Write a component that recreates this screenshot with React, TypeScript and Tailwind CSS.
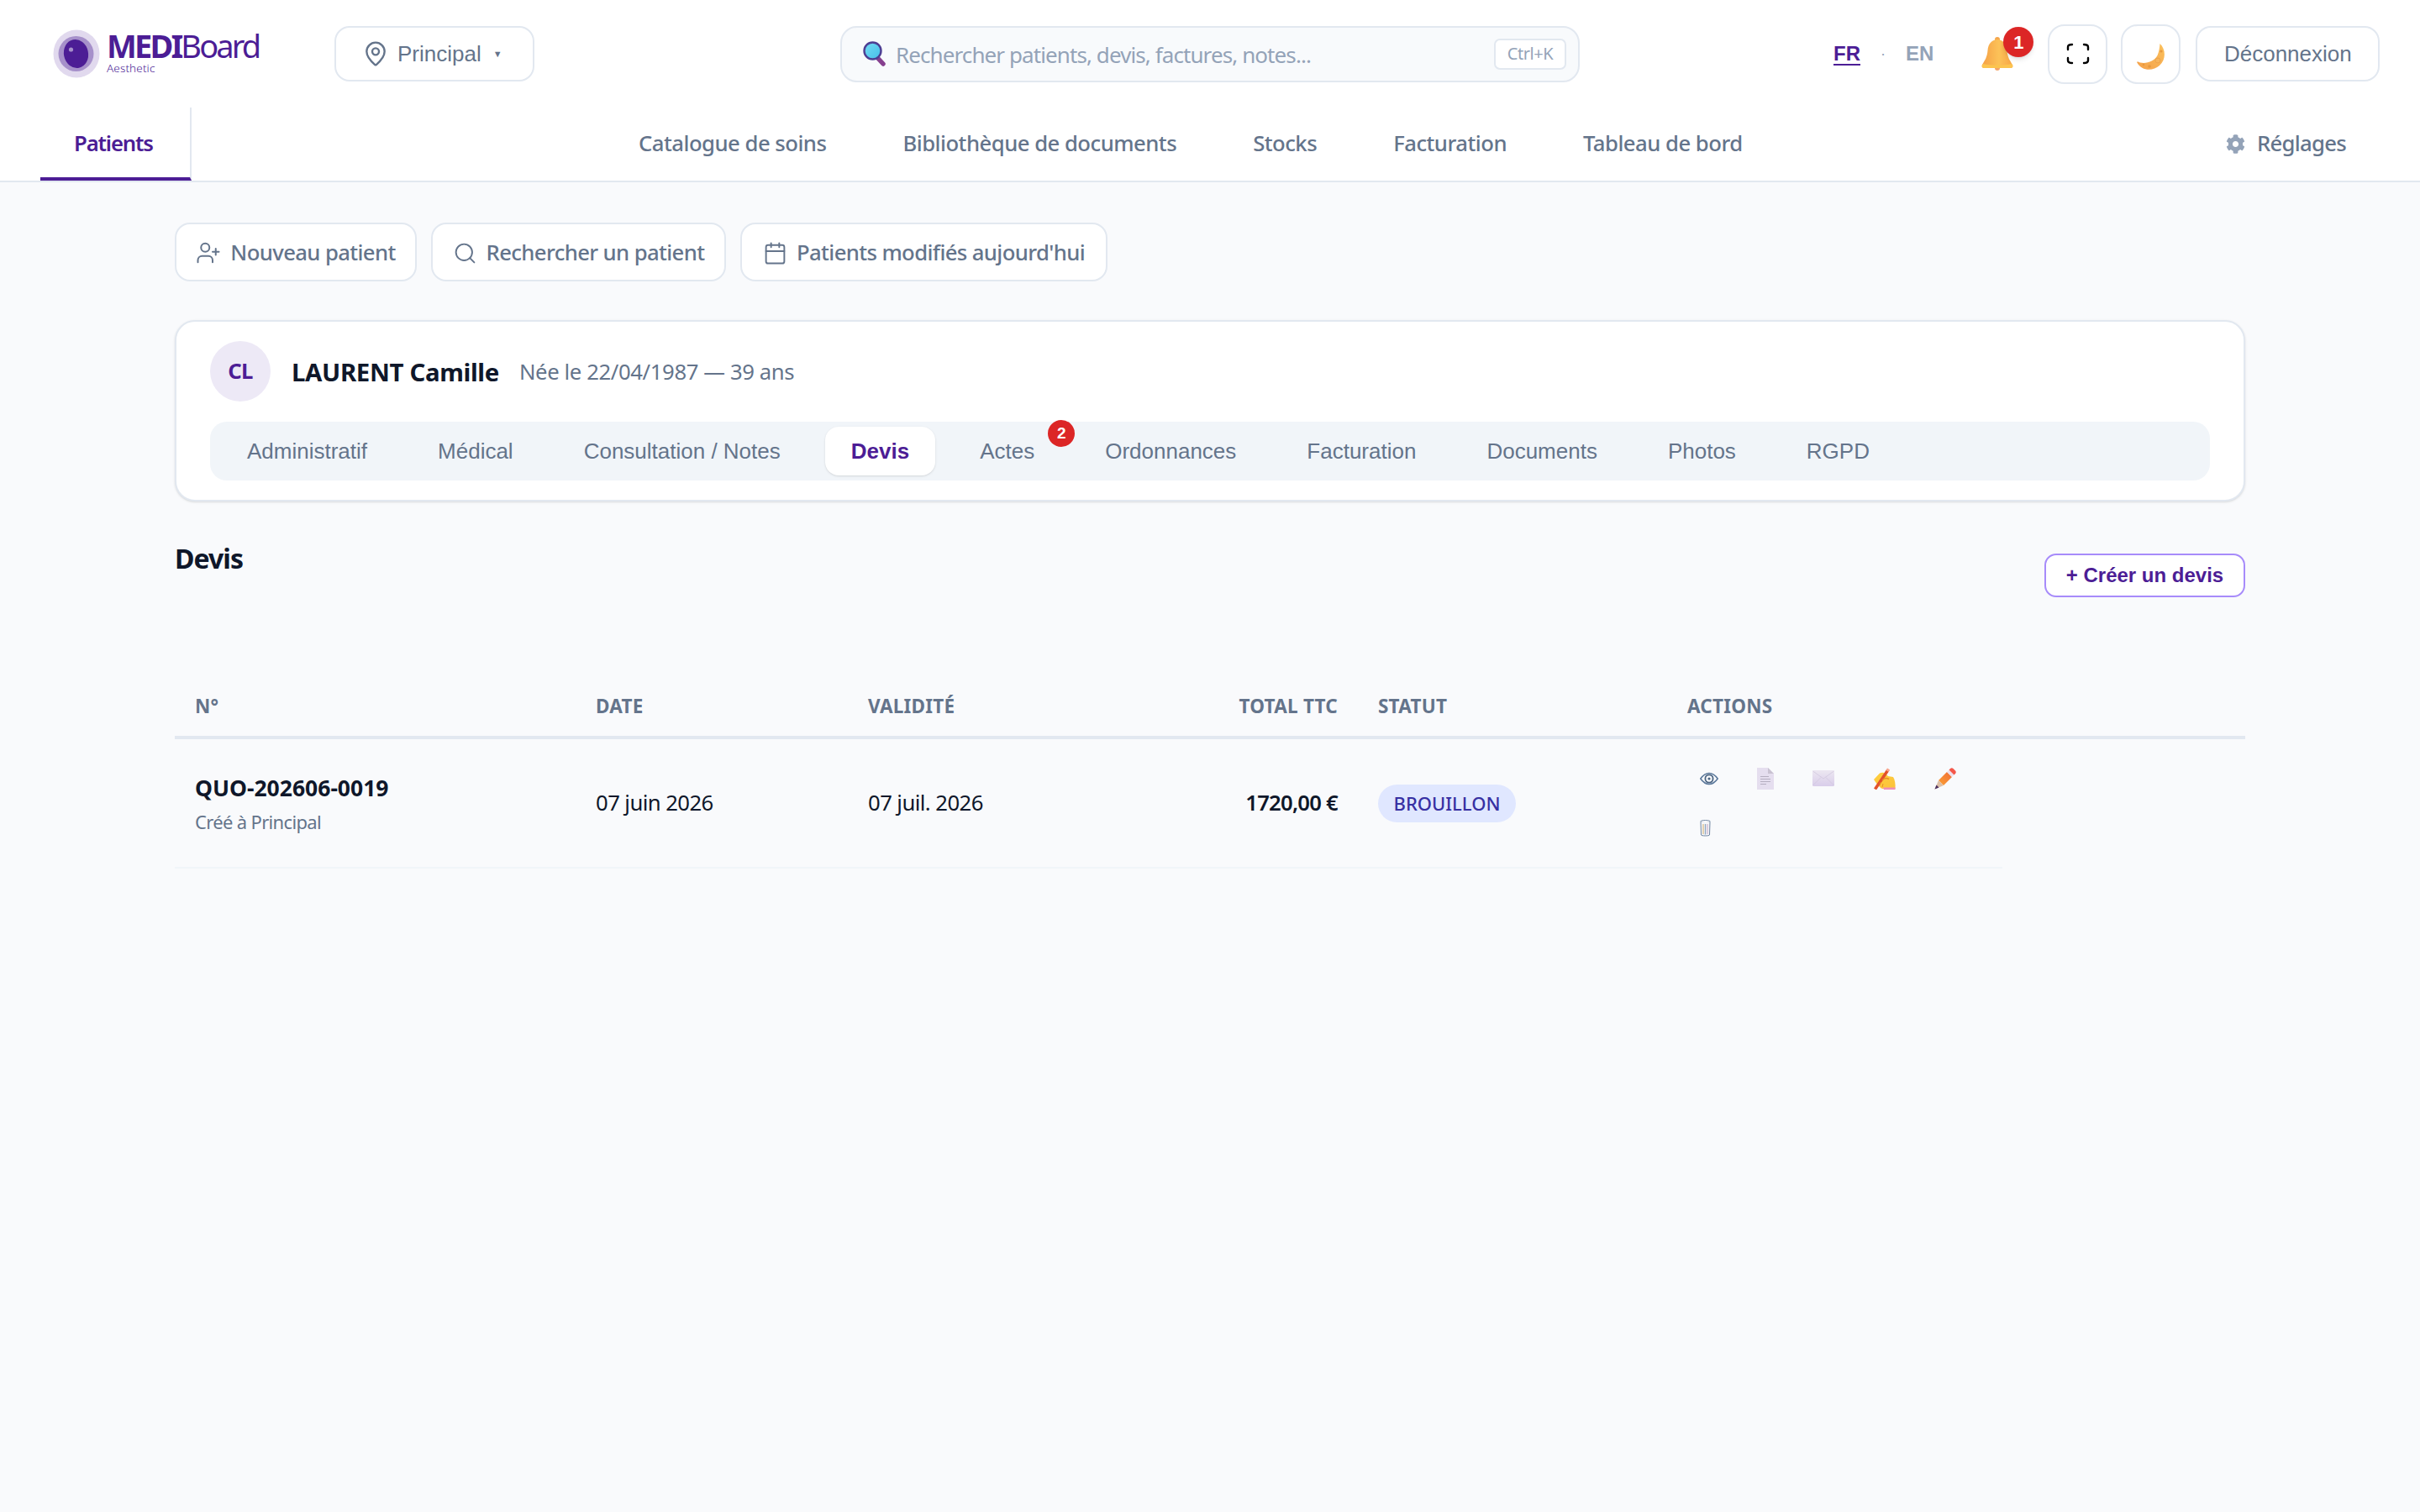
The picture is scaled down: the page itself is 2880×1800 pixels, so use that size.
import { MapPin, UserPlus, Search, Calendar } from "lucide-react";
import { FaCog } from "react-icons/fa";

const ARIAL = "font-['Liberation_Sans',Arial,sans-serif]";

function Logo() {
  return (
    <svg width="56" height="58" viewBox="0 0 56 58" className="shrink-0">
      <ellipse cx="28" cy="29" rx="27.5" ry="28.5" fill="#e1d9ee" />
      <ellipse cx="27.5" cy="29" rx="21" ry="21" fill="#a690ca" />
      <ellipse cx="27.5" cy="29" rx="14.5" ry="17" fill="#4c1d95" transform="rotate(-12 27.5 29)" />
      <circle cx="21.5" cy="24" r="2.6" fill="#a690ca" />
    </svg>
  );
}

function Magnifier() {
  return (
    <svg width="30" height="30" viewBox="0 0 30 30" className="shrink-0">
      <defs>
        <linearGradient id="lens" x1="0" y1="0" x2="1" y2="1">
          <stop offset="0" stopColor="#74dcf4" />
          <stop offset="1" stopColor="#45bfe8" />
        </linearGradient>
      </defs>
      <path d="M18.5 20 L25 27" stroke="#86408f" strokeWidth="5.5" strokeLinecap="round" />
      <circle cx="12.5" cy="11.5" r="10" fill="url(#lens)" stroke="#4d3f93" strokeWidth="2.4" />
    </svg>
  );
}

function Bell() {
  return (
    <svg width="38" height="40" viewBox="0 0 38 40" className="shrink-0">
      <defs>
        <linearGradient id="bell" x1="0" y1="0" x2="1" y2="0">
          <stop offset="0" stopColor="#f59f45" />
          <stop offset="0.55" stopColor="#fcc258" />
          <stop offset="1" stopColor="#f7a445" />
        </linearGradient>
      </defs>
      <circle cx="19" cy="37" r="3" fill="#f4a56b" />
      <circle cx="19" cy="3" r="3" fill="#f5a74c" />
      <path d="M19 3 C25 3 30 8 30.5 16 C31 24 34 28 37 33 C38 35 37 37 35 37 L3 37 C1 37 0 35 1 33 C4 28 7 24 7.5 16 C8 8 13 3 19 3 Z" fill="url(#bell)" />
      <path d="M2 32 C12 34 26 34 36 32 C37 33 38 35 37 36 C36 37 35 37 34 37 L4 37 C3 37 2 37 1 36 C0 35 1 33 2 32 Z" fill="#fcc44f" />
    </svg>
  );
}

function Moon() {
  return (
    <svg width="34" height="32" viewBox="0 0 34 32" className="mt-[8px] shrink-0">
      <defs>
        <linearGradient id="moon" x1="1" y1="0" x2="0" y2="1">
          <stop offset="0" stopColor="#fbc15c" />
          <stop offset="1" stopColor="#f4a04a" />
        </linearGradient>
      </defs>
      <path d="M27.5 0 C34 6 35.5 18 27 26 C19 33 6 33 0 22 C1 21 2 22 4 22.5 C12 24 21 21 24.5 14 C26.5 9.5 27 5 27.5 0 Z" fill="url(#moon)" />
      <circle cx="29" cy="9" r="1.5" fill="#e6983f" />
      <circle cx="25" cy="20" r="3" fill="#f7b45a" stroke="#e9a04a" strokeWidth="0.8" />
      <circle cx="15" cy="27" r="1.8" fill="#e6983f" />
      <circle cx="8" cy="25" r="1.3" fill="#e6983f" />
    </svg>
  );
}

function Corners() {
  return (
    <svg width="28" height="26" viewBox="0 0 28 26" fill="none" stroke="#000" strokeWidth="2.4" strokeLinecap="round">
      <path d="M2 8 V5 Q2 2 7 2" />
      <path d="M21 2 Q26 2 26 5 V8" />
      <path d="M26 18 V21 Q26 24 21 24" />
      <path d="M7 24 Q2 24 2 21 V18" />
    </svg>
  );
}

function Eye() {
  return (
    <svg width="22" height="26" viewBox="0 0 22 26" fill="none">
      <path d="M0.8 13 C4 8.5 7.5 6.5 11 6.5 C14.5 6.5 18 8.5 21.2 13 C18 17.5 14.5 19.5 11 19.5 C7.5 19.5 4 17.5 0.8 13 Z" stroke="#5d7a9c" strokeWidth="1.6" />
      <circle cx="11" cy="13" r="4.6" stroke="#4b6482" strokeWidth="1.8" />
      <circle cx="11" cy="13" r="1.6" fill="#4b6482" />
    </svg>
  );
}

function Doc() {
  return (
    <svg width="20" height="26" viewBox="0 0 20 26">
      <path d="M0 0 H13 L20 7 V26 H0 Z" fill="#e5deef" />
      <path d="M13 0 L20 7 H13 Z" fill="#c9c2d2" />
      <path d="M4 10.5 H14 M4 13.5 H16 M4 16.5 H16 M4 19.5 H11" stroke="#b5aec0" strokeWidth="1.2" />
    </svg>
  );
}

function Envelope() {
  return (
    <svg width="26" height="20" viewBox="0 0 26 20">
      <defs>
        <linearGradient id="env" x1="0" y1="0" x2="0" y2="1">
          <stop offset="0" stopColor="#ece7f1" />
          <stop offset="1" stopColor="#d9cdea" />
        </linearGradient>
      </defs>
      <rect x="0" y="0" width="26" height="19" rx="1.5" fill="url(#env)" />
      <path d="M0.5 1 L13 10 L25.5 1 M0.5 18 L10 8.5 M25.5 18 L16 8.5" stroke="#d2c8de" strokeWidth="0.8" fill="none" />
    </svg>
  );
}

function Hand() {
  return (
    <svg width="27" height="26" viewBox="0 0 27 26">
      <defs>
        <linearGradient id="hand" x1="0" y1="0" x2="1" y2="1">
          <stop offset="0" stopColor="#ffcf3d" />
          <stop offset="1" stopColor="#fbc23c" />
        </linearGradient>
      </defs>
      <path d="M1 14 L8 6.5 C10 5.5 13 5.5 15 7 L18 10 L24 11 C26 14 27 19 26.5 25 L12 25 C9 25 5 20 1 14 Z" fill="url(#hand)" />
      <path d="M12 23.5 H26.5 V26 H13 Z" fill="#ef8fb8" />
      <path d="M2.5 25.5 L18 2.5" stroke="#e2512b" strokeWidth="3.6" />
      <path d="M17 4 L18.6 1.6" stroke="#f8a48c" strokeWidth="3.6" />
      <path d="M11 15 C13 12.5 16 12 19 13.5" stroke="#e98c2a" strokeWidth="1.4" fill="none" />
      <path d="M8 21 L9 17 M11 23 L12 19" stroke="#e98c2a" strokeWidth="1" />
    </svg>
  );
}

function Pencil() {
  return (
    <svg width="26" height="26" viewBox="0 0 26 26">
      <defs>
        <linearGradient id="pencil" x1="0" y1="1" x2="1" y2="0">
          <stop offset="0" stopColor="#fba033" />
          <stop offset="1" stopColor="#f06d38" />
        </linearGradient>
      </defs>
      <path d="M5 15 L15 5 L21 11 L11 21 Z" fill="url(#pencil)" />
      <path d="M5 15 L11 21 L0.5 25.5 Z" fill="#dcbfa8" />
      <path d="M0.5 25.5 L2.5 20.5 L5.5 23.5 Z" fill="#4a2f5e" />
      <path d="M15 5 L17.5 2.5 L23.5 8.5 L21 11 Z" fill="#ecdfec" />
      <path d="M17.5 2.5 L19 1 C20 0 21.5 0 22.5 1 L25 3.5 C26 4.5 26 6 25 7 L23.5 8.5 Z" fill="#f4574a" />
    </svg>
  );
}

function Trash() {
  return (
    <svg width="13" height="20" viewBox="0 0 13 20" fill="none">
      <ellipse cx="6.5" cy="2" rx="5.8" ry="1.5" stroke="#6f85a1" strokeWidth="1" />
      <path d="M1 2.5 L1.5 18 C1.5 19.3 11.5 19.3 11.5 18 L12 2.5" stroke="#6f85a1" strokeWidth="1" fill="#f5f6f9" />
      <path d="M4 5 V17" stroke="#d9bd88" strokeWidth="1.3" />
      <path d="M6.5 5 V17.5" stroke="#8ea6c2" strokeWidth="1.3" />
      <path d="M9 5 V17" stroke="#cfb5cd" strokeWidth="1.3" />
    </svg>
  );
}

function HeaderTop() {
  return (
    <div className="flex h-[128px] items-center pl-[63px] pr-[48px]">
      <div className="flex w-[335px] shrink-0 items-center gap-[8px]">
        <Logo />
        <div className="relative -top-[3px] flex flex-col">
          <div className="text-[38px] leading-[38px] tracking-[-0.075em] text-[#4c1d95]">
            <span className="font-bold">MEDI</span>
            <span className="font-normal">Board</span>
          </div>
          <div className="mt-[1px] text-[13.5px] font-light leading-[14px] tracking-[0.01em] text-[#4c1d95]">Aesthetic</div>
        </div>
      </div>
      <button className={`flex h-[66px] w-[238px] shrink-0 items-center rounded-[18px] border-2 border-[#e2e8f0] bg-white pl-[31px] text-[26px] text-[#64748b] ${ARIAL}`}>
        <MapPin size={32} strokeWidth={1.8} className="shrink-0" />
        <span className="ml-[10px]">Principal</span>
        <span className="ml-[14px] text-[11px]">▼</span>
      </button>
      <div className="ml-[364px] flex h-[67px] w-[880px] shrink-0 items-center rounded-[20px] border-2 border-[#e2e8f0] bg-[#f8fafc] pl-[24px] pr-[14px]">
        <Magnifier />
        <span className="ml-[10px] pt-[2px] text-[26px] tracking-[-0.035em] text-[#94a3b8]">Rechercher patients, devis, factures, notes...</span>
        <span className="ml-auto flex h-[37px] w-[86px] items-center justify-center rounded-[7px] border-2 border-[#e2e8f0] bg-white text-[20px] tracking-[-0.02em] text-[#94a3b8]">Ctrl+K</span>
      </div>
      <div className={`ml-[302px] flex shrink-0 items-center text-[24px] font-bold text-[#94a3b8] ${ARIAL}`}>
        <span className="text-[#4c1d95] underline underline-offset-[4px]">FR</span>
        <span className="ml-[24px] text-[18px] font-normal">·</span>
        <span className="ml-[24px]">EN</span>
      </div>
      <div className="relative ml-[57px] shrink-0">
        <Bell />
        <span className={`absolute -right-[24px] -top-[12px] flex h-[36px] w-[36px] items-center justify-center rounded-full bg-[#dc2626] text-[22px] font-bold text-white shadow-md ${ARIAL}`}>1</span>
      </div>
      <button className="ml-[41px] flex h-[71px] w-[71px] shrink-0 items-center justify-center rounded-[20px] border-2 border-[#e2e8f0] bg-white">
        <Corners />
      </button>
      <button className="ml-[16px] flex h-[71px] w-[71px] shrink-0 items-center justify-center rounded-[20px] border-2 border-[#e2e8f0] bg-white">
        <Moon />
      </button>
      <button className={`ml-[18px] flex h-[66px] w-[219px] shrink-0 items-center justify-center rounded-[18px] border-2 border-[#e2e8f0] bg-white text-[26px] text-[#64748b] ${ARIAL}`}>Déconnexion</button>
    </div>
  );
}

function HeaderNav() {
  return (
    <nav className="flex h-[87px] pl-[48px] text-[25.7px] font-medium tracking-[-0.02em] text-[#64748b]">
      <a className="flex w-[180px] items-center border-b-[4px] border-r-2 border-b-[#4c1d95] border-r-[#e2e8f0] pl-[40px] pt-[4px] font-semibold tracking-[-0.045em] text-[#4c1d95]">Patients</a>
      <div className="ml-[532px] flex items-center gap-[91px]">
        <a>Catalogue de soins</a>
        <a>Bibliothèque de documents</a>
        <a>Stocks</a>
        <a>Facturation</a>
        <a>Tableau de bord</a>
      </div>
      <a className="ml-auto flex items-center pr-[88px] tracking-[-0.028em]">
        <FaCog size={23} className="mr-[14px] text-[#94a3b8]" />
        Réglages
      </a>
    </nav>
  );
}

const quickBtn = "flex h-[70px] items-center justify-center rounded-[18px] border-2 border-[#e2e8f0] bg-white pt-[2px] text-[25.7px] font-medium tracking-[-0.024em] text-[#64748b]";

function QuickActions() {
  return (
    <div className="flex gap-[17px]">
      <button className={`${quickBtn} w-[288px]`}>
        <UserPlus size={30} strokeWidth={1.6} className="mr-[11px]" />
        Nouveau patient
      </button>
      <button className={`${quickBtn} w-[351px]`}>
        <Search size={29} strokeWidth={1.6} className="mr-[11px]" />
        Rechercher un patient
      </button>
      <button className={`${quickBtn} w-[437px]`}>
        <Calendar size={29} strokeWidth={1.6} className="mr-[11px]" />
        Patients modifiés aujourd'hui
      </button>
    </div>
  );
}

function PatientCard() {
  const before = ["Administratif", "Médical", "Consultation / Notes"];
  const after = ["Ordonnances", "Facturation", "Documents", "Photos", "RGPD"];
  return (
    <div className="mt-[46px] h-[216px] rounded-[24px] border-2 border-[#e2e8f0] bg-white px-[40px] pt-[23px] shadow-sm">
      <div className="flex h-[72px] items-center">
        <div className="flex h-[72px] w-[72px] items-center justify-center rounded-full bg-[#ede9f6] text-[25.7px] font-bold tracking-[-0.03em] text-[#4c1d95]">CL</div>
        <div className="ml-[25px] pt-[2px] text-[29.4px] font-bold tracking-[-0.012em] text-[#0f172a]">LAURENT Camille</div>
        <div className="ml-[24px] pt-[2px] text-[25.7px] tracking-[-0.015em] text-[#64748b]">Née le 22/04/1987 — 39 ans</div>
      </div>
      <div className={`mt-[24px] flex h-[70px] items-center rounded-[20px] bg-[#f1f5f9] pl-[2px] text-[26px] text-[#64748b] ${ARIAL}`}>
        {before.map((t) => (
          <span key={t} className="flex h-[58px] items-center px-[42px]">{t}</span>
        ))}
        <span className="mx-[11px] flex h-[58px] items-center rounded-[16px] bg-white px-[31px] font-bold text-[#4c1d95] shadow-sm">Devis</span>
        <span className="relative flex h-[58px] items-center px-[42px]">
          Actes
          <span className="absolute -right-[6px] -top-[8px] flex h-[32px] w-[32px] items-center justify-center rounded-full bg-[#dc2626] text-[19px] font-bold text-white">2</span>
        </span>
        {after.map((t) => (
          <span key={t} className="flex h-[58px] items-center px-[42px]">{t}</span>
        ))}
      </div>
    </div>
  );
}

function QuotesTable() {
  return (
    <div className="mt-[93px]">
      <div className="grid h-[76px] grid-cols-[478px_323px_392px_215px_368px_1fr] items-center border-b-4 border-[#e2e8f0] pt-[2px] text-[22.5px] font-bold tracking-[0.01em] text-[#64748b]">
        <div className="pl-[24px]">N°</div>
        <div className="pl-[23px]">DATE</div>
        <div className="pl-[24px]">VALIDITÉ</div>
        <div className="pr-[24px] text-right">TOTAL TTC</div>
        <div className="pl-[24px]">STATUT</div>
        <div className="pl-[24px]">ACTIONS</div>
      </div>
      <div className="grid h-[154px] w-[2175px] grid-cols-[478px_323px_392px_215px_368px_399px] items-center border-b-2 border-[#f1f5f9] text-[25.7px] tracking-[-0.022em] text-[#0f172a]">
        <div className="pl-[24px]">
          <div className="text-[26.5px] font-bold tracking-[0]">QUO-202606-0019</div>
          <div className="mt-[3.5px] text-[22px] leading-[30px] tracking-[-0.03em] text-[#64748b]">Créé à Principal</div>
        </div>
        <div className="pl-[23px] pt-[1px]">07 juin 2026</div>
        <div className="pl-[24px] pt-[1px]">07 juil. 2026</div>
        <div className="pr-[24px] pt-[1px] text-right font-semibold tracking-[-0.03em]">1720,00 €</div>
        <div className="pl-[24px]">
          <span className="inline-flex h-[45px] w-[164px] items-center justify-center rounded-full bg-[#e0e7ff] text-[22px] font-medium tracking-[0] text-[#3730a3]">BROUILLON</span>
        </div>
        <div className="flex w-[380px] flex-wrap items-center gap-x-[46px] gap-y-[33px] pl-[39px]">
          <span className="flex h-[26px] items-center"><Eye /></span>
          <span className="flex h-[26px] items-center"><Doc /></span>
          <span className="flex h-[26px] items-center"><Envelope /></span>
          <span className="flex h-[26px] items-center"><Hand /></span>
          <span className="flex h-[26px] items-center"><Pencil /></span>
          <span className="flex h-[26px] items-center"><Trash /></span>
        </div>
      </div>
    </div>
  );
}

export default function App() {
  return (
    <div className="min-h-screen bg-[#f9fafc] font-['Noto_Sans',sans-serif]">
      <header className="border-b-2 border-[#e2e8f0] bg-white">
        <HeaderTop />
        <HeaderNav />
      </header>
      <main className="mx-[208px] pt-[48px]">
        <QuickActions />
        <PatientCard />
        <div className="mt-[46px] flex items-start justify-between">
          <h2 className="text-[32px] font-bold leading-[44px] tracking-[-0.03em] text-[#0f172a]">Devis</h2>
          <button className={`mt-[16px] h-[52px] w-[239px] rounded-[14px] border-2 border-[#a78bfa] bg-white text-[24px] font-bold text-[#4c1d95] ${ARIAL}`}>+ Créer un devis</button>
        </div>
        <QuotesTable />
      </main>
    </div>
  );
}
